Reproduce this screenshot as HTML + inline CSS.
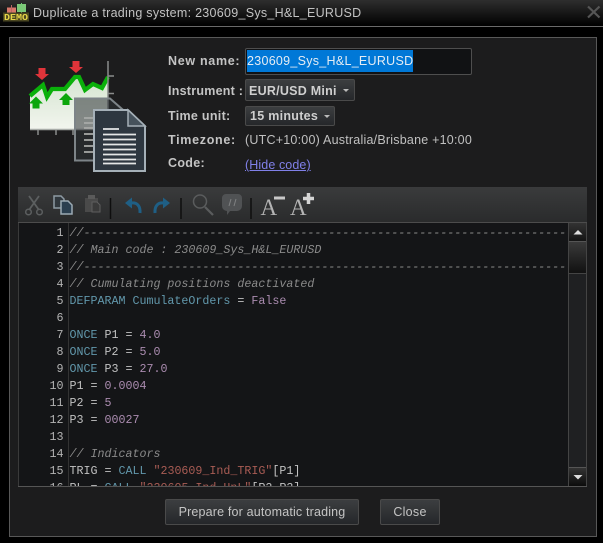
<!DOCTYPE html>
<html><head><meta charset="utf-8">
<style>
html,body{margin:0;padding:0;background:#000;}
#r{position:relative;width:603px;height:543px;overflow:hidden;background:#000;font-family:"Liberation Sans",sans-serif;color:#c8c8c8;}
#r div,#r svg{position:absolute;}
.lb{font-weight:bold;font-size:12.5px;color:#c4c4c4;letter-spacing:.3px;white-space:nowrap;line-height:16px;}
.btn{box-sizing:border-box;border:1px solid #4a4a4a;border-radius:2px;background:linear-gradient(#3c3e40,#25272a);text-align:center;color:#c4c4c4;white-space:nowrap;}
.ln{width:43.5px;text-align:right;color:#b4b4b4;}
.c{white-space:pre;}
.ln,.c{font-family:"Liberation Mono",monospace;font-size:11.67px;line-height:17px;height:17px;}
.cm{color:#8a8a8a;font-style:italic}.kw{color:#6298ac}.nm{color:#ab8cb0}.st{color:#a95c54}.tx{color:#c2c2c2}
</style></head><body><div id="r">
<div style="left:0;top:0;width:603px;height:26px;background:linear-gradient(#2e2e2e,#000)"></div>
<div style="left:0;top:26px;width:603px;height:1px;background:#6a6a6a"></div>
<svg style="left:3px;top:3px" width="27" height="19" viewBox="0 0 27 19"><rect x="4" y="4.500" width="9" height="5" fill="#d8776a"/><rect x="8" y="2" width="1" height="8" fill="#b66"/><rect x="14" y="1" width="9" height="8" fill="#7cc878"/><rect x="18" y="0" width="1" height="10" fill="#7c7"/><rect x="0" y="9.500" width="26" height="9" fill="#4a4620"/><text x="13" y="17" font-family="Liberation Mono" font-size="9" font-weight="bold" fill="#e6d648" text-anchor="middle" textLength="24" lengthAdjust="spacingAndGlyphs">DEMO</text></svg>
<div style="left:33px;top:5px;font-size:12.5px;line-height:16px;color:#c2c2c2;white-space:nowrap;letter-spacing:.28px">Duplicate a trading system: 230609_Sys_H&amp;L_EURUSD</div>
<svg style="left:587px;top:5px" width="14" height="14" viewBox="0 0 14 14"><path d="M1 1.500L12.500 12.500M12.500 1.500L1 12.500" stroke="#555" stroke-width="2.200"/></svg>

<div style="left:9px;top:37px;width:586px;height:498px;background:#1c1c1d;border:1px solid #585858"></div>

<svg style="left:28px;top:58px" width="120" height="118" viewBox="28 58 120 118">
<defs><linearGradient id="g" x1="0" y1="0" x2="0" y2="1"><stop offset="0" stop-color="#d4e4d0"/><stop offset="1" stop-color="#f2f5ee"/></linearGradient></defs>
<path d="M30 95L43 84L47 98L52 88L65 88L75 76L79 76L85 89L93 83L102 87L108 76V129H30Z" fill="url(#g)"/>
<path d="M30 96L43 85L47 97L52 89L65 89L75 77L79 77L85 90L93 84L102 88L108 77" fill="none" stroke="#0ab00a" stroke-width="4.200"/>
<path d="M30 129.500H108" stroke="#a8aca8" stroke-width="1.500"/>
<path d="M108 61V130M108 76h6M108 93.500h6M38 130v5M56 130v5M73 130v5" stroke="#8a8c8c" stroke-width="1.500" fill="none"/>
<path d="M38.500 68h7v6h3.500l-7 6-7-6h3.500z" fill="#e0343a"/><path d="M72.500 61h7v6h3.500l-7 6-7-6h3.500z" fill="#e0343a"/>
<path d="M32.500 108.500v-5h-3.500l7-7 7 7h-3.500v5z" fill="#0ca60c"/><path d="M62.500 105v-5h-3.500l7-7 7 7h-3.500v5z" fill="#0ca60c"/>
<path d="M75 98.500h35l16 14v48H75z" fill="#2e3338" fill-opacity=".56" stroke="#7d8488" stroke-width="2"/>
<path d="M84 118h10M84 123h10M84 128h10M84 134h10M84 140h10M84 146h10M84 152h10" stroke="#a8aaa8" stroke-width="1.800"/>
<path d="M94 110h34l17 16v45H94z" fill="#2e3740" stroke="#a5b0b8" stroke-width="2"/>
<path d="M128 110v16h17z" fill="#46525c" stroke="#a5b0b8" stroke-width="1.500"/>
<path d="M103 129h16M103 134.500h33M103 139.500h33M103 144.500h33M103 149.500h33M103 154.500h33M103 159.500h33M103 163.500h33" stroke="#e4e6e6" stroke-width="1.700"/>
</svg>

<div class="lb" style="left:168px;top:53px;letter-spacing:.7px">New name:</div>
<div class="lb" style="left:168px;top:83px;letter-spacing:.25px">Instrument :</div>
<div class="lb" style="left:168px;top:108px">Time unit:</div>
<div class="lb" style="left:168px;top:132px;letter-spacing:.7px">Timezone:</div>
<div class="lb" style="left:168px;top:155px">Code:</div>

<div style="left:245px;top:48px;width:225px;height:25px;background:#111214;border:1px solid #4e4e4e;border-radius:2px"></div>
<div style="left:247px;top:50px;width:166px;height:22px;background:#0078d7"></div>
<div style="left:247px;top:53px;font-size:12.5px;line-height:16px;color:#e4ecf4;white-space:nowrap;letter-spacing:.28px">230609_Sys_H&amp;L_EURUSD</div>

<div class="btn" style="left:245px;top:79px;width:110px;height:22px"></div>
<div class="lb" style="left:249px;top:83px;color:#cfcfcf;letter-spacing:.25px">EUR/USD Mini</div>
<svg style="left:342px;top:88px" width="8" height="5"><path d="M1 1h6L4 4z" fill="#bbb"/></svg>
<div class="btn" style="left:245px;top:106px;width:90px;height:20px"></div>
<div class="lb" style="left:250px;top:108px;color:#cfcfcf;letter-spacing:.28px">15 minutes</div>
<svg style="left:323px;top:114px" width="8" height="5"><path d="M1 1h6L4 4z" fill="#bbb"/></svg>
<div style="left:245px;top:132px;font-size:12.5px;line-height:16px;color:#c0c0c0;white-space:nowrap;letter-spacing:.22px">(UTC+10:00) Australia/Brisbane +10:00</div>
<div style="left:245px;top:157px;font-size:12.5px;line-height:16px;color:#8080e8;text-decoration:underline;white-space:nowrap;letter-spacing:.1px">(Hide code)</div>

<div style="left:18px;top:187px;width:569px;height:35px;background:linear-gradient(#3a3b3c,#2a2b2c)"></div>
<div style="left:18px;top:222px;width:569px;height:1px;background:#4c4c4c"></div>
<svg style="left:18px;top:187px" width="320" height="35" viewBox="18 187 320 35">
<path d="M29 196L39 210M39 196L29 210" stroke="#5c5f60" stroke-width="1.800" fill="none"/><circle cx="28.500" cy="212" r="2.800" fill="none" stroke="#5c5f60" stroke-width="1.500"/><circle cx="39.500" cy="212" r="2.800" fill="none" stroke="#5c5f60" stroke-width="1.500"/>
<path d="M54 196h7l3 3v9h-10z" fill="#31383e" stroke="#8d9aa3" stroke-width="1.500"/><path d="M61 201h7l4 4v9H61z" fill="#2b3f50" stroke="#9baab4" stroke-width="1.500"/>
<path d="M85 198h13v14H85z" fill="#4a4a4a"/><rect x="88" y="195" width="7" height="4" fill="#5a5a5a"/><path d="M92 202h5l3 3v7h-8z" fill="#3a3a3a" stroke="#5e5e5e"/>
<path d="M110.500 198V219" stroke="#0e0e0e" stroke-width="1.500"/>
<path d="M125 203l7-5.500v11z" fill="#1f5f85"/><path d="M131 203c6-1 9.500 3 9 10" fill="none" stroke="#1f5f85" stroke-width="3"/>
<path d="M170 203l-7-5.500v11z" fill="#1f5f85"/><path d="M164 203c-6-1-9.500 3-9 10" fill="none" stroke="#1f5f85" stroke-width="3"/>
<path d="M181 198V219" stroke="#0e0e0e" stroke-width="1.500"/>
<circle cx="200" cy="201.500" r="6.500" fill="none" stroke="#5a5c5d" stroke-width="1.500"/><path d="M205 207L213 215" stroke="#5a5c5d" stroke-width="2.200"/>
<path d="M226 194h12a4 4 0 0 1 4 4v8a5 5 0 0 1-5 5h-7l-3 4v-4a5 5 0 0 1-5-5v-8a4 4 0 0 1 4-4z" fill="#505254"/>
<path d="M229 206l2-7M234 206l2-7" stroke="#7f8182" stroke-width="1"/>
<path d="M251 198V219" stroke="#0e0e0e" stroke-width="1.500"/>
<path d="M274 198h11" stroke="#c8c8c8" stroke-width="3"/><path d="M303 198.500h11M308.500 193v11" stroke="#d4d4d4" stroke-width="3.500"/>
<text x="260.500" y="215" font-family="Liberation Serif" font-size="23" fill="#b4b4b4">A</text>
<text x="290" y="215" font-family="Liberation Serif" font-size="23" fill="#b4b4b4">A</text>
</svg>

<div style="left:18px;top:223px;width:569px;height:263px;background:#141517;overflow:hidden"></div>
<div style="left:18px;top:223px;width:1px;height:263px;background:#3a3a3a"></div>
<div style="left:68px;top:223px;width:1px;height:263px;background:#333"></div>
<div style="left:18px;top:486px;width:569px;height:1px;background:#555"></div>

<div style="left:18px;top:223px;width:550px;height:263px;overflow:hidden">
<div class="ln" style="left:2px;top:2px">1</div><div class="c" style="left:51.500px;top:2px"><span class="cm">//-----------------------------------------------------------------------</span></div>
<div class="ln" style="left:2px;top:19px">2</div><div class="c" style="left:51.500px;top:19px"><span class="cm">// Main code : 230609_Sys_H&amp;L_EURUSD</span></div>
<div class="ln" style="left:2px;top:36px">3</div><div class="c" style="left:51.500px;top:36px"><span class="cm">//-----------------------------------------------------------------------</span></div>
<div class="ln" style="left:2px;top:53px">4</div><div class="c" style="left:51.500px;top:53px"><span class="cm">// Cumulating positions deactivated</span></div>
<div class="ln" style="left:2px;top:70px">5</div><div class="c" style="left:51.500px;top:70px"><span class="kw">DEFPARAM CumulateOrders</span><span class="tx"> = </span><span class="nm">False</span></div>
<div class="ln" style="left:2px;top:87px">6</div>
<div class="ln" style="left:2px;top:104px">7</div><div class="c" style="left:51.500px;top:104px"><span class="kw">ONCE</span><span class="tx"> P1 = </span><span class="nm">4.0</span></div>
<div class="ln" style="left:2px;top:121px">8</div><div class="c" style="left:51.500px;top:121px"><span class="kw">ONCE</span><span class="tx"> P2 = </span><span class="nm">5.0</span></div>
<div class="ln" style="left:2px;top:138px">9</div><div class="c" style="left:51.500px;top:138px"><span class="kw">ONCE</span><span class="tx"> P3 = </span><span class="nm">27.0</span></div>
<div class="ln" style="left:2px;top:155px">10</div><div class="c" style="left:51.500px;top:155px"><span class="tx">P1 = </span><span class="nm">0.0004</span></div>
<div class="ln" style="left:2px;top:172px">11</div><div class="c" style="left:51.500px;top:172px"><span class="tx">P2 = </span><span class="nm">5</span></div>
<div class="ln" style="left:2px;top:189px">12</div><div class="c" style="left:51.500px;top:189px"><span class="tx">P3 = </span><span class="nm">00027</span></div>
<div class="ln" style="left:2px;top:206px">13</div>
<div class="ln" style="left:2px;top:223px">14</div><div class="c" style="left:51.500px;top:223px"><span class="cm">// Indicators</span></div>
<div class="ln" style="left:2px;top:240px">15</div><div class="c" style="left:51.500px;top:240px"><span class="tx">TRIG = </span><span class="kw">CALL</span> <span class="st">"230609_Ind_TRIG"</span><span class="tx">[P1]</span></div>
<div class="ln" style="left:2px;top:257px">16</div><div class="c" style="left:51.500px;top:257px"><span class="tx">PL = </span><span class="kw">CALL</span> <span class="st">"230605_Ind_HnL"</span><span class="tx">[P2,P3]</span></div>
</div>

<div style="left:568px;top:223px;width:19px;height:263px;background:#1f2022;border-left:1px solid #444;border-right:1px solid #444;box-sizing:border-box"></div>
<div style="left:569px;top:223px;width:17px;height:18px;background:linear-gradient(#333,#141414);border-bottom:1px solid #555"></div>
<svg style="left:572px;top:229px" width="12" height="6"><path d="M1.500 5.500L6 1l4.500 4.500z" fill="#ddd"/></svg>
<div style="left:569px;top:242px;width:17px;height:31px;background:linear-gradient(#3a3a3a,#111);border-bottom:1px solid #444"></div>
<div style="left:569px;top:467px;width:17px;height:19px;background:linear-gradient(#333,#0c0c0c);border-top:1px solid #555;box-sizing:border-box"></div>
<svg style="left:572px;top:474px" width="12" height="6"><path d="M1.500 1h9L6 5.500z" fill="#ddd"/></svg>

<div class="btn" style="left:165px;top:499px;width:194px;height:26px;font-size:12.5px;line-height:25px;letter-spacing:.17px">Prepare for automatic trading</div>
<div class="btn" style="left:380px;top:499px;width:60px;height:26px;font-size:12.5px;line-height:25px;letter-spacing:.28px">Close</div>
</div></body></html>
